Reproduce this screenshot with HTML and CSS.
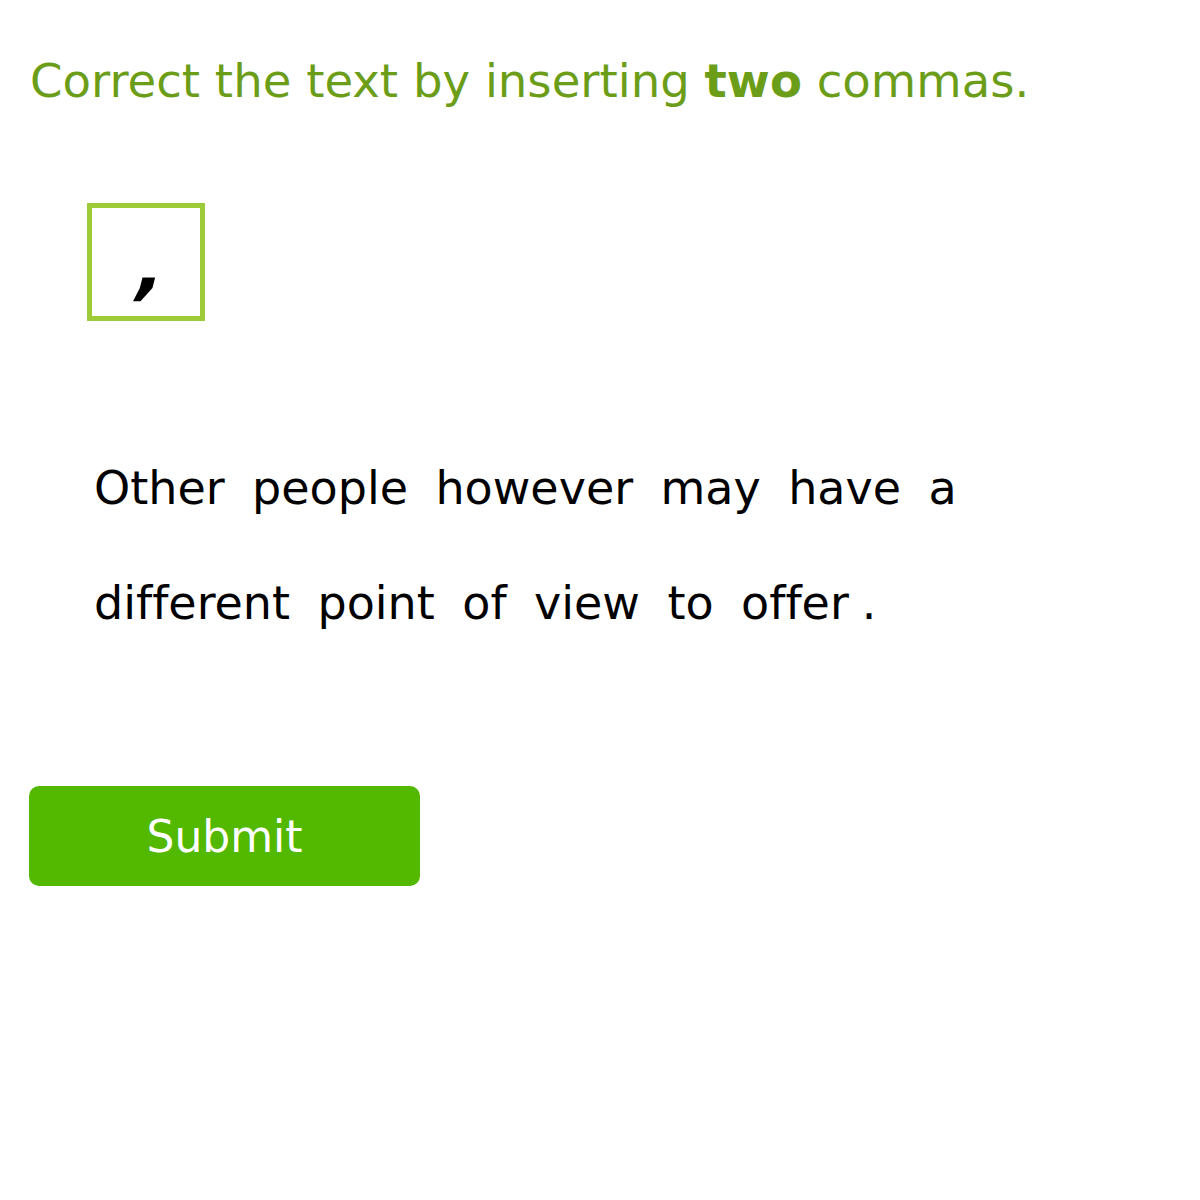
FILE: index.html
```html
<!DOCTYPE html>
<html>
<head>
<meta charset="utf-8">
<link rel="stylesheet" href="styles.css">
</head>
<body>
<main class="page">
  <h1 class="prompt">Correct the text by inserting <b>two</b> commas.</h1>
  <div class="tray">
    <div class="tile"><span class="comma">,</span></div>
  </div>
  <p class="passage"><span class="w">Other</span> <span class="w">people</span> <span class="w">however</span> <span class="w">may</span> <span class="w">have</span> <span class="w">a</span> <span class="w">different</span> <span class="w">point</span> <span class="w">of</span> <span class="w">view</span> <span class="w">to</span> <span class="w">offer</span><span class="w dot">.</span></p>
  <button class="submit">Submit</button>
</main>
</body>
</html>
```
FILE: styles.css
```css
html, body {
  margin: 0;
  padding: 0;
  background: #ffffff;
}
.page {
  font-family: "DejaVu Sans", Verdana, sans-serif;
  font-variant-ligatures: none;
  padding: 53px 0 0 30px;
  display: flex;
  flex-direction: column;
  align-items: flex-start;
}
.prompt {
  margin: 0;
  font-size: 46.6px;
  line-height: 56px;
  font-weight: normal;
  color: #6c9d18;
}
.prompt b {
  font-weight: bold;
}
.tray {
  margin: 94px 0 0 57px;
}
.tile {
  box-sizing: border-box;
  width: 118px;
  height: 118px;
  border: 5px solid #9ccb37;
  display: flex;
  justify-content: center;
  align-items: flex-start;
}
.comma {
  display: inline-block;
  font-weight: bold;
  font-size: 72px;
  line-height: 72px;
  margin-top: 22px;
  margin-left: 12px;
  color: #000;
  transform: skewX(-14deg);
}
.passage {
  margin: 110px 0 0 64px;
  width: 920px;
  font-size: 46px;
  line-height: 115px;
  color: #000;
  word-spacing: 12.8px;
}
.dot {
  margin-left: 13px;
}
.submit {
  margin: 125px 0 0 -1px;
  width: 391px;
  height: 100px;
  border: none;
  border-radius: 10px;
  background: #52b800;
  color: #ffffff;
  font-family: "DejaVu Sans", Verdana, sans-serif;
  font-size: 44px;
  cursor: pointer;
}
```
